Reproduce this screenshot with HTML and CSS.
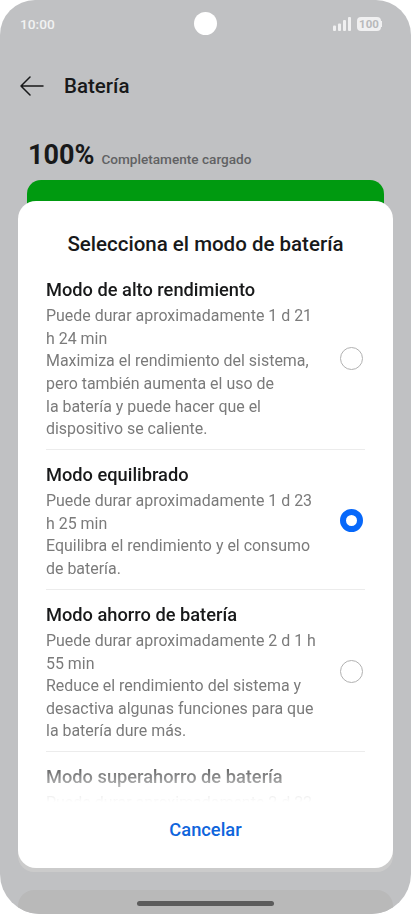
FILE: index.html
```html
<!DOCTYPE html>
<html lang="es">
<head>
    <meta charset="UTF-8">
    <meta name="viewport" content="width=device-width, initial-scale=1.0">
    <title>Batería</title>
    <link rel="stylesheet" href="styles.css">
</head>
<body>
    <div class="screen">
        <div class="status-bar">
            <span class="time">10:00</span>
            <span class="camera"></span>
            <div class="status-icons">
                <svg class="signal" width="18" height="14" viewBox="0 0 18 14">
                    <rect x="0" y="8.5" width="3" height="5.5" rx="1"/>
                    <rect x="5" y="6.5" width="3" height="7.5" rx="1"/>
                    <rect x="10" y="3" width="3" height="11" rx="1"/>
                    <rect x="15" y="0" width="3" height="14" rx="1"/>
                </svg>
                <span class="battery-icon">100</span>
            </div>
        </div>
        <div class="header">
            <svg class="back" width="24" height="20" viewBox="0 0 24 20">
                <path d="M10 1 L1 10 L10 19 M1 10 H23"/>
            </svg>
            <div class="title">Batería</div>
        </div>
        <div class="summary">
            <span class="percent">100%</span>
            <span class="state">Completamente cargado</span>
        </div>
        <div class="level"></div>
        <div class="card card-main"></div>
        <div class="card card-next"></div>

        <div class="dialog">
            <h2 class="dialog-title">Selecciona el modo de batería</h2>
            <div class="modes">
                <div class="mode">
                    <div class="mode-text">
                        <h3>Modo de alto rendimiento</h3>
                        <p>Puede durar aproximadamente 1 d 21<br>h 24 min<br>Maximiza el rendimiento del sistema,<br>pero también aumenta el uso de<br>la batería y puede hacer que el<br>dispositivo se caliente.</p>
                    </div>
                    <span class="radio"></span>
                </div>
                <div class="mode">
                    <div class="mode-text">
                        <h3>Modo equilibrado</h3>
                        <p>Puede durar aproximadamente 1 d 23<br>h 25 min<br>Equilibra el rendimiento y el consumo<br>de batería.</p>
                    </div>
                    <span class="radio checked"></span>
                </div>
                <div class="mode">
                    <div class="mode-text">
                        <h3>Modo ahorro de batería</h3>
                        <p>Puede durar aproximadamente 2 d 1 h<br>55 min<br>Reduce el rendimiento del sistema y<br>desactiva algunas funciones para que<br>la batería dure más.</p>
                    </div>
                    <span class="radio"></span>
                </div>
                <div class="mode">
                    <div class="mode-text">
                        <h3>Modo superahorro de batería</h3>
                        <p>Puede durar aproximadamente 2 d 22</p>
                    </div>
                </div>
            </div>
            <button class="cancel">Cancelar</button>
        </div>
        <div class="nav-handle"></div>
    </div>
</body>
</html>
```
FILE: styles.css
```css
* {
    box-sizing: border-box;
}
body {
    margin: 0;
    background-color: #fff;
    font-family: Roboto, "Liberation Sans", sans-serif;
    color: #18191a;
}
.screen {
    position: relative;
    width: 411px;
    height: 914px;
    display: flex;
    flex-direction: column;
    overflow: hidden;
    background-color: #c0c1c3;
    border-radius: 35px 35px 40px 40px;
}
.status-bar {
    display: grid;
    grid-template-columns: 1fr 23px 1fr;
    align-items: center;
    height: 47px;
    padding: 0 20px;
    flex-shrink: 0;
}
.time {
    color: #f1f2f2;
    font-size: 13.7px;
    font-weight: 500;
}
.camera {
    width: 23px;
    height: 23px;
    border-radius: 50%;
    background-color: #fff;
}
.status-icons {
    display: flex;
    justify-content: flex-end;
    align-items: center;
    gap: 6px;
    margin-right: 10px;
}
.signal {
    fill: #f0f0f1;
}
.battery-icon {
    position: relative;
    width: 24px;
    height: 14px;
    border-radius: 4px;
    background-color: #f0f0f1;
    color: #b8b9bb;
    font-size: 11.5px;
    font-weight: 700;
    line-height: 15px;
    text-align: center;
}
.battery-icon::after {
    content: "";
    position: absolute;
    top: 4px;
    right: -1px;
    width: 1px;
    height: 6px;
    background-color: #f0f0f1;
}
.header {
    display: flex;
    align-items: center;
    gap: 20px;
    height: 78px;
    padding-left: 20px;
    flex-shrink: 0;
}
.back {
    fill: none;
    stroke: #18191a;
    stroke-width: 1.5;
    stroke-linecap: round;
    stroke-linejoin: round;
}
.title {
    font-size: 20.5px;
    font-weight: 500;
}
.summary {
    display: flex;
    align-items: baseline;
    gap: 7px;
    height: 55px;
    padding: 14px 28px 0;
    flex-shrink: 0;
}
.percent {
    font-size: 27px;
    font-weight: 700;
    line-height: 33px;
}
.state {
    color: #616263;
    font-size: 13.6px;
    font-weight: 500;
}
.level {
    height: 60px;
    margin: 0 27px;
    border-radius: 14px;
    background-color: #009a10;
    flex-shrink: 0;
}
.card {
    margin: 0 18px;
    border-radius: 16px;
    flex-shrink: 0;
}
.card-main {
    height: 612px;
    margin-top: 20px;
    background-color: #cbcbcb;
}
.card-next {
    height: 60px;
    margin-top: 18px;
    background-color: #b9b9b9;
}
.dialog {
    position: absolute;
    top: 201px;
    left: 18px;
    width: 375px;
    height: 667px;
    display: flex;
    flex-direction: column;
    padding: 0 28px;
    border-radius: 18px;
    background-color: #fff;
}
.dialog-title {
    margin: 0;
    padding-top: 31px;
    height: 64.4px;
    font-size: 20.5px;
    font-weight: 500;
    line-height: 25px;
    text-align: center;
    white-space: nowrap;
}
.modes {
    height: 537px;
    overflow: hidden;
    -webkit-mask-image: linear-gradient(#000 487px, transparent 537px);
    mask-image: linear-gradient(#000 487px, transparent 537px);
}
.mode {
    display: flex;
    justify-content: space-between;
    align-items: center;
    padding: 12px 2px 8.6px 0;
    border-bottom: 1px solid #ececec;
}
.mode h3 {
    margin: 0;
    font-size: 18.25px;
    font-weight: 500;
    line-height: 25px;
}
.mode p {
    margin: 3px 0 0;
    color: #7b7b7b;
    font-size: 15.95px;
    line-height: 22.55px;
    white-space: nowrap;
}
.radio {
    width: 23px;
    height: 23px;
    flex-shrink: 0;
    margin-bottom: 2px;
    border: 1.5px solid #b0b0b0;
    border-radius: 50%;
}
.radio.checked {
    border: 6px solid #0768fa;
}
.cancel {
    align-self: center;
    margin-top: 15px;
    padding: 0;
    border: none;
    background: none;
    color: #0f65dc;
    font-family: inherit;
    font-size: 18.3px;
    font-weight: 500;
    line-height: 26px;
}
.nav-handle {
    position: absolute;
    left: 137px;
    bottom: 8px;
    width: 137px;
    height: 5px;
    border-radius: 3px;
    background-color: #5c5c5c;
}
```
